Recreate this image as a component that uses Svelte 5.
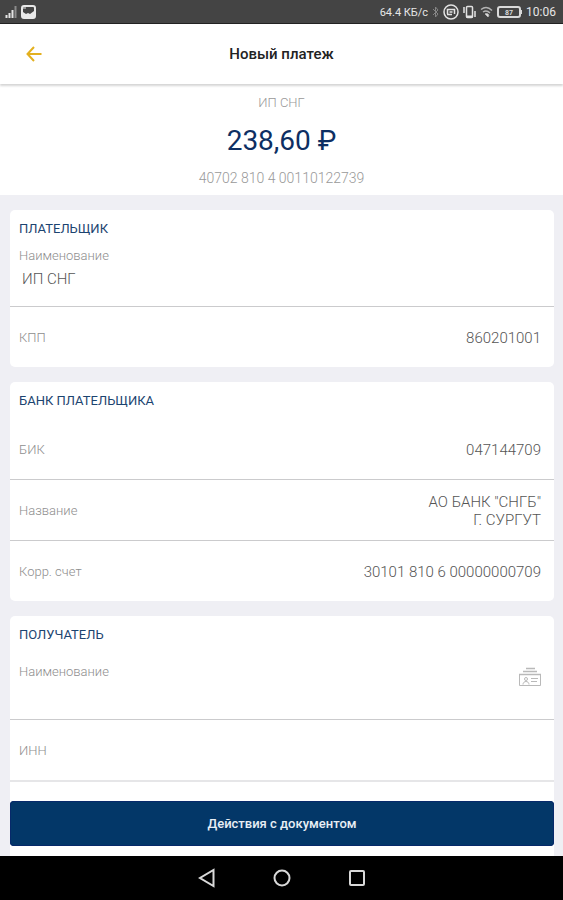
<script lang="ts">
	interface Row {
		label: string;
		value: string[];
	}

	const payerRows: Row[] = [{ label: 'КПП', value: ['860201001'] }];

	const bankRows: Row[] = [
		{ label: 'БИК', value: ['047144709'] },
		{ label: 'Название', value: ['АО БАНК "СНГБ"', 'Г. СУРГУТ'] },
		{ label: 'Корр. счет', value: ['30101 810 6 00000000709'] }
	];

	let payerName = $state('ИП СНГ');
	let recipientName = $state('');
	let recipientInn = $state('');
</script>

{#snippet rows(items: Row[])}
	<dl class="rows">
		{#each items as item}
			<div class="row">
				<dt>{item.label}</dt>
				<dd>
					{#each item.value as line}
						<span>{line}</span>
					{/each}
				</dd>
			</div>
		{/each}
	</dl>
{/snippet}

<div class="screen">
	<div class="status-bar">
		<div class="status-group">
			<svg width="14" height="14" viewBox="0 0 14 14">
				<path d="M3.500 13v-3M6.500 13V8M9.500 13V5" stroke="#e4e4e4" stroke-width="2" />
				<path d="M12.500 13V1" stroke="#8b8b8b" stroke-width="2" />
			</svg>
			<svg width="15" height="14" viewBox="0 0 15 14">
				<rect x="1" y="1" width="13" height="12" rx="2" fill="#444" stroke="#e8e8e8" stroke-width="2" />
				<path d="M2 7l3 2 2-1 2 1 4-3v6H2z" fill="#e8e8e8" />
				<path d="M2 2h3v2H2z" fill="#e8e8e8" opacity="0.5" />
			</svg>
		</div>
		<div class="status-group">
			<span class="speed">64.4 КБ/с</span>
			<svg width="7" height="12" viewBox="0 0 7 12" fill="none" stroke="#858585">
				<path d="M1 3l5 5-2.500 3V1L6 4 1 9" />
			</svg>
			<svg width="16" height="16" viewBox="0 0 16 16" fill="none" stroke="#e2e2e2">
				<circle cx="8" cy="8" r="7" stroke-width="1.500" />
				<path d="M4.500 10V5.500h7V10M4 10.500h5M6.500 8h3" stroke-width="1.500" />
			</svg>
			<svg width="13" height="14" viewBox="0 0 13 14" fill="none" stroke="#e2e2e2">
				<rect x="3.500" y="1.500" width="6" height="11" rx="1" stroke-width="1.500" />
				<path d="M3 11.500h7" stroke-width="2" />
				<path d="M1 2v6M12 6v6" stroke-width="1.500" />
			</svg>
			<svg width="13" height="12" viewBox="0 0 13 12" fill="none" stroke="#b4b4b4">
				<path d="M1 3.500c4-3 8-2 11 1M3 6c3-2 5-1 7 1" stroke-width="1.500" />
				<path d="M5 8c2-1 3 0 4 1l-1 2z" fill="#e2e2e2" />
			</svg>
			<svg class="battery" width="25" height="12" viewBox="0 0 25 12">
				<rect x="1" y="1" width="22" height="10" rx="2" fill="none" stroke="#d9d9d9" stroke-width="2" />
				<path d="M24 4v4" stroke="#d9d9d9" stroke-width="2" />
				<text x="12" y="9" text-anchor="middle">87</text>
			</svg>
			<span class="clock">10:06</span>
		</div>
	</div>

	<header class="app-bar">
		<button class="back" type="button" aria-label="Назад">
			<svg width="16" height="16" viewBox="0 0 16 16" fill="none" stroke="#e3b01f" stroke-width="2">
				<path d="M15.500 8H1.500M8 1L1.500 8 8 15" />
			</svg>
		</button>
		<h1>Новый платеж</h1>
	</header>

	<section class="summary">
		<p class="company">ИП СНГ</p>
		<p class="amount">238,60 ₽</p>
		<p class="account">40702 810 4 00110122739</p>
	</section>

	<main>
		<div class="cards">
			<section class="card">
				<h2>ПЛАТЕЛЬЩИК</h2>
				<div class="field filled">
					<label for="payer-name">Наименование</label>
					<input id="payer-name" type="text" bind:value={payerName} />
				</div>
				{@render rows(payerRows)}
			</section>

			<section class="card">
				<h2>БАНК ПЛАТЕЛЬЩИКА</h2>
				{@render rows(bankRows)}
			</section>

			<section class="card last">
				<h2>ПОЛУЧАТЕЛЬ</h2>
				<div class="field empty">
					<label for="recipient-name">Наименование</label>
					<input id="recipient-name" type="text" bind:value={recipientName} />
					<button class="pick" type="button" aria-label="Выбрать получателя">
						<svg width="24" height="20" viewBox="0 0 24 20" fill="none" stroke="#b9b9b9">
							<path d="M8 1.500h9M5 4.500h14" stroke-width="1.500" />
							<path d="M1 7.500h22" stroke-width="1.500" />
							<path d="M1.500 8v10.500h21V8" />
							<circle cx="8" cy="12" r="1.500" />
							<path d="M5 17.500c0-4 6-4 6 0" />
							<path d="M13 11.500h7M13 14.500h6" />
						</svg>
					</button>
				</div>
				<div class="row">
					<label for="recipient-inn">ИНН</label>
					<input id="recipient-inn" type="text" bind:value={recipientInn} />
				</div>
			</section>
		</div>

		<button class="actions" type="button">Действия с документом</button>
	</main>

	<nav class="system-nav">
		<button type="button" aria-label="Назад">
			<svg width="18" height="20" viewBox="0 0 18 20"><path d="M15.500 2v16L2 10z" /></svg>
		</button>
		<button type="button" aria-label="Домой">
			<svg width="18" height="18" viewBox="0 0 18 18"><circle cx="9" cy="9" r="7.500" /></svg>
		</button>
		<button type="button" aria-label="Недавние">
			<svg width="18" height="18" viewBox="0 0 18 18"><rect x="2" y="2" width="14" height="14" rx="1" /></svg>
		</button>
	</nav>
</div>

<style>
	:global(body) {
		margin: 0;
		background: #efeff4;
	}

	.screen {
		display: flex;
		flex-direction: column;
		height: 100vh;
		overflow: hidden;
		font-family: Roboto, sans-serif;
		color: #555;
	}

	h1,
	h2,
	p,
	dl,
	dd {
		margin: 0;
	}

	button {
		padding: 0;
		border: 0;
		background: none;
		font-family: inherit;
		cursor: pointer;
	}

	button svg {
		display: block;
	}

	input {
		min-width: 0;
		padding: 0;
		border: 0;
		outline: 0;
		background: none;
		font: inherit;
		color: inherit;
	}

	.status-bar {
		display: flex;
		flex-shrink: 0;
		justify-content: space-between;
		box-sizing: border-box;
		height: 24px;
		padding: 1px 7px 0 3px;
		border-bottom: 1px solid #222;
		background: #444;
		color: #e6e6e6;
	}

	.status-group {
		display: flex;
		align-items: center;
		gap: 4px;
	}

	.speed {
		font-size: 11px;
	}

	.battery text {
		font-size: 7px;
		font-weight: 700;
		fill: #d9d9d9;
	}

	.clock {
		font-size: 12px;
	}

	.app-bar {
		position: relative;
		z-index: 1;
		display: grid;
		grid-template-columns: 68px 1fr 68px;
		flex-shrink: 0;
		align-items: center;
		height: 60px;
		background: #fff;
		box-shadow: 0 2px 2px #d6d6d6;
	}

	.back {
		display: grid;
		place-items: center;
		height: 48px;
	}

	h1 {
		font-size: 15px;
		font-weight: 500;
		line-height: 20px;
		text-align: center;
		color: #222;
	}

	.summary {
		flex-shrink: 0;
		padding: 9px 0 7px;
		background: #fff;
		text-align: center;
	}

	.company,
	.account {
		font-weight: 300;
		line-height: 20px;
		color: #999;
	}

	.company {
		font-size: 13px;
	}

	.account {
		font-size: 14px;
	}

	.amount {
		padding: 10px 0 9px;
		font-size: 28px;
		line-height: 36px;
		color: #0d2f63;
	}

	main {
		position: relative;
		flex: 1;
		min-height: 0;
	}

	.cards {
		display: flex;
		flex-direction: column;
		gap: 15px;
		box-sizing: border-box;
		height: 100%;
		padding: 15px 9px 0 10px;
		overflow: hidden;
	}

	.card {
		flex-shrink: 0;
		border-radius: 5px;
		background: #fff;
	}

	.card.last {
		flex-grow: 1;
		border-radius: 5px 5px 0 0;
	}

	.card.last .row {
		min-height: 63px;
		border-bottom: 2px solid #e6e6e8;
	}

	h2 {
		padding: 10px 9px 9px;
		font-size: 13px;
		font-weight: 400;
		line-height: 18px;
		color: #1c4470;
	}

	.field {
		display: grid;
		grid-template-columns: 1fr auto;
		align-content: start;
		box-sizing: border-box;
		padding: 0 12px 0 9px;
	}

	.field.filled {
		height: 59px;
		row-gap: 4px;
	}

	.field.filled input {
		grid-row: 2;
		padding-left: 3px;
		line-height: 20px;
	}

	.field.empty {
		height: 66px;
		padding-top: 10px;
	}

	.field.empty input {
		grid-row: 2;
	}

	.pick {
		grid-row: 1 / 3;
		grid-column: 2;
		align-self: start;
		margin-top: 4px;
	}

	label,
	dt {
		font-size: 13px;
		font-weight: 300;
		line-height: 18px;
		color: #8e8e8e;
	}

	.row {
		display: flex;
		align-items: center;
		justify-content: space-between;
		box-sizing: border-box;
		min-height: 61px;
		padding: 2px 13px 0 9px;
		border-top: 1px solid #cbcbcd;
	}

	h2 + .rows .row:first-child {
		min-height: 60px;
		border-top: 0;
	}

	dd,
	input {
		font-size: 15px;
		font-weight: 300;
	}

	dd {
		display: flex;
		flex-direction: column;
		line-height: 18px;
		text-align: right;
	}

	.row input {
		flex: 1;
		text-align: right;
	}

	.actions {
		position: absolute;
		right: 9px;
		bottom: 10px;
		left: 10px;
		height: 45px;
		border-radius: 4px;
		background: #033768;
		box-shadow: inset 0 0 0 1px #07296a;
		font-size: 13px;
		font-weight: 500;
		color: #e8eef5;
	}

	.system-nav {
		display: flex;
		flex-shrink: 0;
		align-items: center;
		justify-content: center;
		gap: 57px;
		height: 44px;
		background: #000;
	}

	.system-nav svg {
		fill: none;
		stroke: #d9d9d9;
		stroke-width: 2;
	}
</style>
